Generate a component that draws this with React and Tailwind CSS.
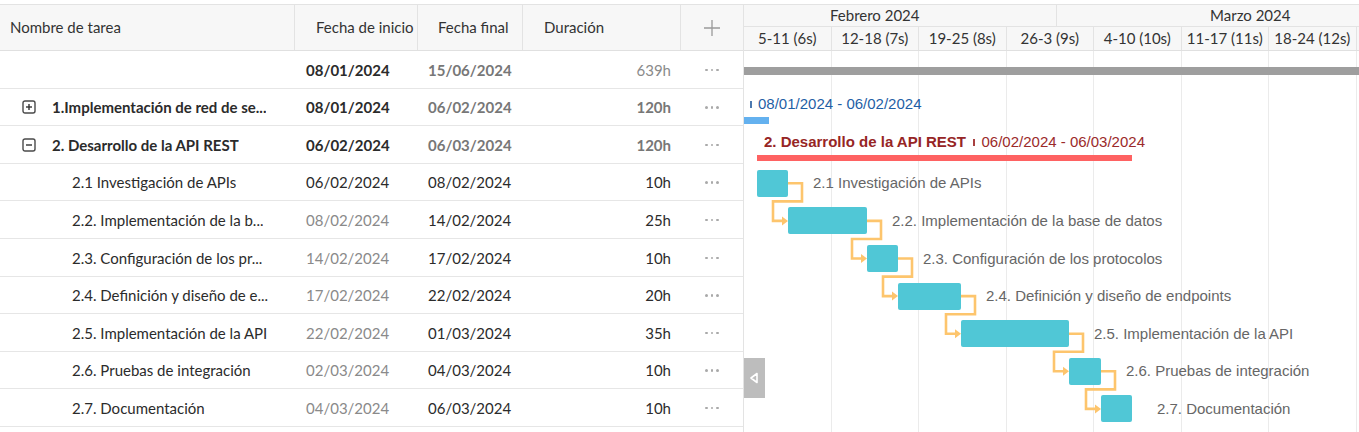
import React from "react";

const cols = "grid grid-cols-[295px_123px_105px_158px_62px]";

const rows = [
  { name: "", start: "08/01/2024", end: "15/06/2024", dur: "639h", kind: "summary" },
  { name: "1.Implementación de red de se...", start: "08/01/2024", end: "06/02/2024", dur: "120h", kind: "parent", icon: "plus" },
  { name: "2. Desarrollo de la API REST", start: "06/02/2024", end: "06/03/2024", dur: "120h", kind: "parent", icon: "minus" },
  { name: "2.1 Investigación de APIs", start: "06/02/2024", end: "08/02/2024", dur: "10h", kind: "child", darkStart: true },
  { name: "2.2. Implementación de la b...", start: "08/02/2024", end: "14/02/2024", dur: "25h", kind: "child" },
  { name: "2.3. Configuración de los pr...", start: "14/02/2024", end: "17/02/2024", dur: "10h", kind: "child" },
  { name: "2.4. Definición y diseño de e...", start: "17/02/2024", end: "22/02/2024", dur: "20h", kind: "child" },
  { name: "2.5. Implementación de la API", start: "22/02/2024", end: "01/03/2024", dur: "35h", kind: "child" },
  { name: "2.6. Pruebas de integración", start: "02/03/2024", end: "04/03/2024", dur: "10h", kind: "child" },
  { name: "2.7. Documentación", start: "04/03/2024", end: "06/03/2024", dur: "10h", kind: "child" },
];

// task bars on the timeline (px from gantt left edge)
const tasks = [
  { label: "2.1 Investigación de APIs", left: 13, width: 31 },
  { label: "2.2. Implementación de la base de datos", left: 44, width: 79 },
  { label: "2.3. Configuración de los protocolos", left: 123, width: 31 },
  { label: "2.4. Definición y diseño de endpoints", left: 154, width: 63 },
  { label: "2.5. Implementación de la API", left: 217, width: 108 },
  { label: "2.6. Pruebas de integración", left: 325, width: 32 },
  { label: "2.7. Documentación", left: 357, width: 31 },
];

const ROW = 37.6;
const weeks = ["5-11 (6s)", "12-18 (7s)", "19-25 (8s)", "26-3 (9s)", "4-10 (10s)", "11-17 (11s)", "18-24 (12s)", ""];

function TreeIcon({ type }) {
  return (
    <svg width="14" height="14" viewBox="0 0 14 14" className="shrink-0">
      <rect x="1" y="1" width="12" height="12" rx="2" fill="white" stroke="#4a4a4a" strokeWidth="1.4" />
      <line x1="4" y1="7" x2="10" y2="7" stroke="#333" strokeWidth="1.4" />
      {type === "plus" && <line x1="7" y1="4" x2="7" y2="10" stroke="#333" strokeWidth="1.4" />}
    </svg>
  );
}

function Dots() {
  return (
    <div className="flex justify-center gap-[3px]">
      <span className="w-[2.5px] h-[2.5px] rounded-full bg-[#a9a9a9]"></span>
      <span className="w-[2.5px] h-[2.5px] rounded-full bg-[#a9a9a9]"></span>
      <span className="w-[2.5px] h-[2.5px] rounded-full bg-[#a9a9a9]"></span>
    </div>
  );
}

function GridRow({ r }) {
  const bold = r.kind !== "child";
  return (
    <div className={`${cols} h-[37.6px] border-b border-[#e6e6e6] items-center text-[15px] pt-[1px]`}>
      <div className="flex items-center min-w-0">
        {r.kind === "parent" && (
          <>
            <div className="w-[52px] pl-[22px] flex items-center">
              <TreeIcon type={r.icon} />
            </div>
            <span className="font-bold text-[#2b2b2b] truncate">{r.name}</span>
          </>
        )}
        {r.kind === "child" && <span className="pl-[72px] text-[#2b2b2b] truncate">{r.name}</span>}
      </div>
      <div className={`pl-[11px] ${bold ? "font-bold text-[#2b2b2b]" : r.darkStart ? "text-[#2b2b2b]" : "text-[#8a8a8a]"}`}>
        {r.start}
      </div>
      <div className={`pl-[10px] ${bold ? "font-bold text-[#777]" : "text-[#2b2b2b]"}`}>{r.end}</div>
      <div
        className={`pr-[10px] text-right ${
          r.kind === "summary" ? "text-[#8a8a8a]" : r.kind === "parent" ? "font-bold text-[#777]" : "text-[#2b2b2b]"
        }`}
      >
        {r.dur}
      </div>
      <Dots />
    </div>
  );
}

function Links() {
  const paths = [];
  for (let i = 0; i < tasks.length - 1; i++) {
    const xe = tasks[i].left + tasks[i].width;
    const top = 118.8 + ROW * i;
    const y1 = top + 13.5;
    const yb = 112.8 + ROW * (i + 1);
    const y2 = top + ROW + 13.5;
    paths.push(
      <g key={i}>
        <path
          d={`M${xe} ${y1} H${xe + 14} V${yb} H${xe - 15} V${y2} H${xe - 5}`}
          fill="none"
          stroke="#fdc56d"
          strokeWidth="2.6"
        />
        <polygon points={`${xe - 6},${y2 - 4.5} ${xe},${y2} ${xe - 6},${y2 + 4.5}`} fill="#fdc56d" />
      </g>
    );
  }
  return (
    <svg className="absolute inset-0 w-full h-full pointer-events-none" width="615" height="381">
      {paths}
    </svg>
  );
}

export default function App() {
  return (
    <div className="w-[1359px] h-[432px] overflow-hidden bg-white pt-[4px] font-['Lato',sans-serif]">
      <div className="flex h-full border-t border-[#e3e3e3]">
        {/* grid */}
        <div className="w-[744px] shrink-0 border-r border-[#e3e3e3]">
          <div className={`${cols} h-[46px] bg-[#f7f7f7] border-b border-[#e0e0e0] text-[15px] text-[#333]`}>
            <div className="flex items-center pl-[10px] border-r border-[#e3e3e3]">Nombre de tarea</div>
            <div className="flex items-center pl-[21px] border-r border-[#e3e3e3] whitespace-nowrap overflow-hidden">
              Fecha de inicio
            </div>
            <div className="flex items-center pl-[20px] border-r border-[#e3e3e3]">Fecha final</div>
            <div className="flex items-center pl-[21px] border-r border-[#e3e3e3]">Duración</div>
            <div className="flex items-center justify-center text-[#9a9a9a]">
              <svg width="18" height="18" viewBox="0 0 18 18">
                <path d="M9 1v16M1 9h16" stroke="#9a9a9a" strokeWidth="1.3" />
              </svg>
            </div>
          </div>
          {rows.map((r, i) => (
            <GridRow key={i} r={r} />
          ))}
        </div>

        {/* timeline */}
        <div className="flex-1 min-w-0 flex flex-col overflow-hidden">
          <div className="h-[46px] shrink-0 bg-[#f7f7f7] border-b border-[#e0e0e0] text-[15px] text-[#333]">
            <div className="h-[22px] flex ml-[-50px] border-b border-[#e3e3e3]">
              <div className="w-[362.5px] shrink-0 flex items-center justify-center border-r border-[#e3e3e3]">
                Febrero 2024
              </div>
              <div className="w-[387.5px] shrink-0 flex items-center justify-center">Marzo 2024</div>
            </div>
            <div className="h-[23px] flex">
              {weeks.map((w, i) => (
                <div
                  key={i}
                  className="w-[87.5px] shrink-0 flex items-center justify-center border-r border-[#e3e3e3] whitespace-nowrap"
                >
                  {w}
                </div>
              ))}
            </div>
          </div>
          <div className="relative flex-1 font-['Liberation_Sans',Arial,sans-serif]">
            <div className="absolute inset-0 flex">
              {weeks.map((w, i) => (
                <div key={i} className="w-[87.5px] shrink-0 border-r border-[#ebebeb]"></div>
              ))}
            </div>

            {/* summary */}
            <div className="absolute left-0 right-0 top-[16px] h-[8px] bg-[#9e9e9e]"></div>

            {/* project 1 */}
            <div className="absolute left-[6px] top-[50px] w-[1.5px] h-[7px] bg-[#4d79b0]"></div>
            <div className="absolute left-[14px] top-[44px] text-[15px] leading-[18px] text-[#1f5fa6] whitespace-nowrap">
              08/01/2024 - 06/02/2024
            </div>
            <div className="absolute left-0 top-[66px] w-[25px] h-[7px] bg-[#64b1ef]"></div>

            {/* project 2 */}
            <div className="absolute left-[20px] top-[82px] flex items-center gap-[7px] text-[15px] leading-[18px] whitespace-nowrap">
              <span className="font-bold text-[#962525]">2. Desarrollo de la API REST</span>
              <span className="w-[1.5px] h-[7px] bg-[#a84040]"></span>
              <span className="text-[#9b2a2a]">06/02/2024 - 06/03/2024</span>
            </div>
            <div className="absolute left-[13px] top-[104px] w-[375px] h-[6px] bg-[#fe6262]"></div>

            <Links />

            {tasks.map((t, i) => (
              <React.Fragment key={i}>
                <div
                  className="absolute h-[27px] rounded-[2px] bg-[#50c7d6]"
                  style={{ left: t.left, width: t.width, top: 118.8 + ROW * i }}
                ></div>
                <div
                  className="absolute text-[15px] leading-[18px] text-[#666] whitespace-nowrap"
                  style={{ left: t.left + t.width + 25, top: 118.8 + ROW * i + 4.5 }}
                >
                  {t.label}
                </div>
              </React.Fragment>
            ))}

            {/* collapse handle */}
            <div className="absolute left-[-1px] top-[307px] w-[22px] h-[40px] bg-[#bdbdbd] flex items-center justify-center">
              <svg width="10" height="12" viewBox="0 0 10 12">
                <path d="M8 1.5 L2 6 L8 10.5 Z" fill="none" stroke="white" strokeWidth="1.6" strokeLinejoin="round" />
              </svg>
            </div>
          </div>
        </div>
      </div>
    </div>
  );
}
